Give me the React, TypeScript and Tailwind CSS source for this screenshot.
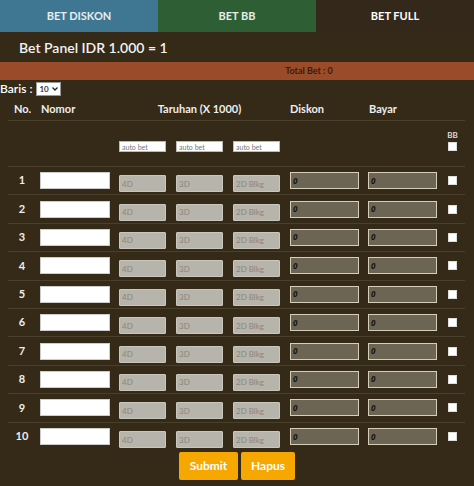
import React from "react";

const rows = [1, 2, 3, 4, 5, 6, 7, 8, 9, 10];

const grey =
  "w-[47px] h-[17px] bg-[#b7b4ab] border border-[#c9c6bd] rounded-[1px] text-[8px] px-[2px] outline-none text-[#8a867c] placeholder:text-[#8a867c] placeholder:opacity-100";

function BetRow({ n, last }: { n: number; last: boolean }) {
  return (
    <div
      className={`grid grid-cols-[28px_78px_57px_57px_57px_79px_78px_23px] items-center h-[28.4px] ${
        last ? "" : "border-b border-[#4a3f2b]"
      }`}
    >
      <div className="text-center text-[11px] font-bold text-[#eee]">{n}</div>
      <div className="pl-[4px]">
        <input readOnly className="w-[70px] h-[17px] bg-white border border-[#ccc] outline-none" />
      </div>
      <div className="pl-[5px]">
        <input readOnly placeholder="4D" className={grey} />
      </div>
      <div className="pl-[5px]">
        <input readOnly placeholder="3D" className={grey} />
      </div>
      <div className="pl-[5px]">
        <input readOnly placeholder="2D Blkg" className={grey} />
      </div>
      <div className="pl-[5px]">
        <div
          className="w-[69px] h-[17px] bg-[#6d6554] border-[1.5px] border-[#d6cfb8] flex items-center px-[2px] text-[8px] italic font-bold text-[#15120c]"
          style={{ fontFamily: "'Open Sans', sans-serif" }}
        >
          0
        </div>
      </div>
      <div className="pl-[4px]">
        <div
          className="w-[69px] h-[17px] bg-[#6d6554] border-[1.5px] border-[#d6cfb8] flex items-center px-[2px] text-[8px] italic font-bold text-[#15120c]"
          style={{ fontFamily: "'Open Sans', sans-serif" }}
        >
          0
        </div>
      </div>
      <div className="flex justify-center pr-[2px]">
        <span className="w-[9px] h-[9px] bg-white border border-[#ddd] block" />
      </div>
    </div>
  );
}

export default function App() {
  return (
    <div
      className="w-[474px] h-[486px] bg-[#352a18] text-white overflow-hidden"
      style={{ fontFamily: "Lato, 'Noto Sans', sans-serif" }}
    >
      {/* tabs */}
      <div className="flex h-[32px] text-[11px] font-bold">
        <div className="w-[158px] bg-[#3f7691] flex items-center justify-center text-[#e6edf0]">BET DISKON</div>
        <div className="w-[158px] bg-[#2e5e34] flex items-center justify-center text-[#e6ede6]">BET BB</div>
        <div className="flex-1 bg-[#33281a] flex items-center justify-center text-white">BET FULL</div>
      </div>

      <div className="h-[30px] flex items-center pl-[19px] text-[14px] font-semibold text-[#f2f2f2]">
        Bet Panel IDR 1.000 = 1
      </div>

      <div className="h-[18px] bg-[#9a4b29] flex items-center justify-center pl-[144px] text-[9px] font-bold text-[#3b1b0b]">
        Total Bet : 0
      </div>

      <div className="h-[18px] flex items-center gap-[4px] text-[12px] font-semibold">
        <span>Baris :</span>
        <div className="w-[25px] h-[14px] bg-white text-[#222] text-[8px] flex items-center justify-between px-[2px] border border-[#999]">
          <span>10</span>
          <svg width="6" height="4" viewBox="0 0 6 4">
            <path d="M0.5 0.5 L3 3 L5.5 0.5" stroke="#222" strokeWidth="1.3" fill="none" />
          </svg>
        </div>
      </div>

      <div className="mx-[8px] w-[457px]">
        {/* header */}
        <div className="grid grid-cols-[28px_78px_171px_79px_78px_23px] items-center h-[23px] border-b border-[#4a3f2b] text-[11px] font-bold text-[#eee]">
          <div className="pl-[6px]">No.</div>
          <div className="pl-[5px]">Nomor</div>
          <div className="text-center">Taruhan (X 1000)</div>
          <div className="pl-[5px]">Diskon</div>
          <div className="pl-[5px]">Bayar</div>
          <div />
        </div>

        {/* auto bet row */}
        <div className="grid grid-cols-[28px_78px_57px_57px_57px_79px_78px_23px] items-center h-[46px] border-b border-[#4a3f2b]">
          <div />
          <div />
          {[0, 1, 2].map((i) => (
            <div key={i} className="pl-[5px]">
              <input
                readOnly
                placeholder="auto bet"
                className="w-[47px] h-[11px] bg-white border border-[#bbb] text-[7px] px-[2px] outline-none placeholder:text-[#777] placeholder:opacity-100"
              />
            </div>
          ))}
          <div />
          <div />
          <div className="flex flex-col items-center gap-[3px] pb-[6px] pr-[2px]">
            <span className="text-[8px] font-bold text-[#ddd] leading-none">BB</span>
            <span className="w-[9px] h-[9px] bg-white border border-[#ddd] block" />
          </div>
        </div>

        {rows.map((n) => (
          <BetRow key={n} n={n} last={n === 10} />
        ))}
      </div>

      <div className="flex justify-center gap-[3px] pt-[1px]">
        <button className="w-[59px] h-[28px] bg-[#f7a800] rounded-[2px] text-white text-[12px] font-bold">
          Submit
        </button>
        <button className="w-[54px] h-[28px] bg-[#f7a800] rounded-[2px] text-white text-[12px] font-bold">
          Hapus
        </button>
      </div>
    </div>
  );
}
